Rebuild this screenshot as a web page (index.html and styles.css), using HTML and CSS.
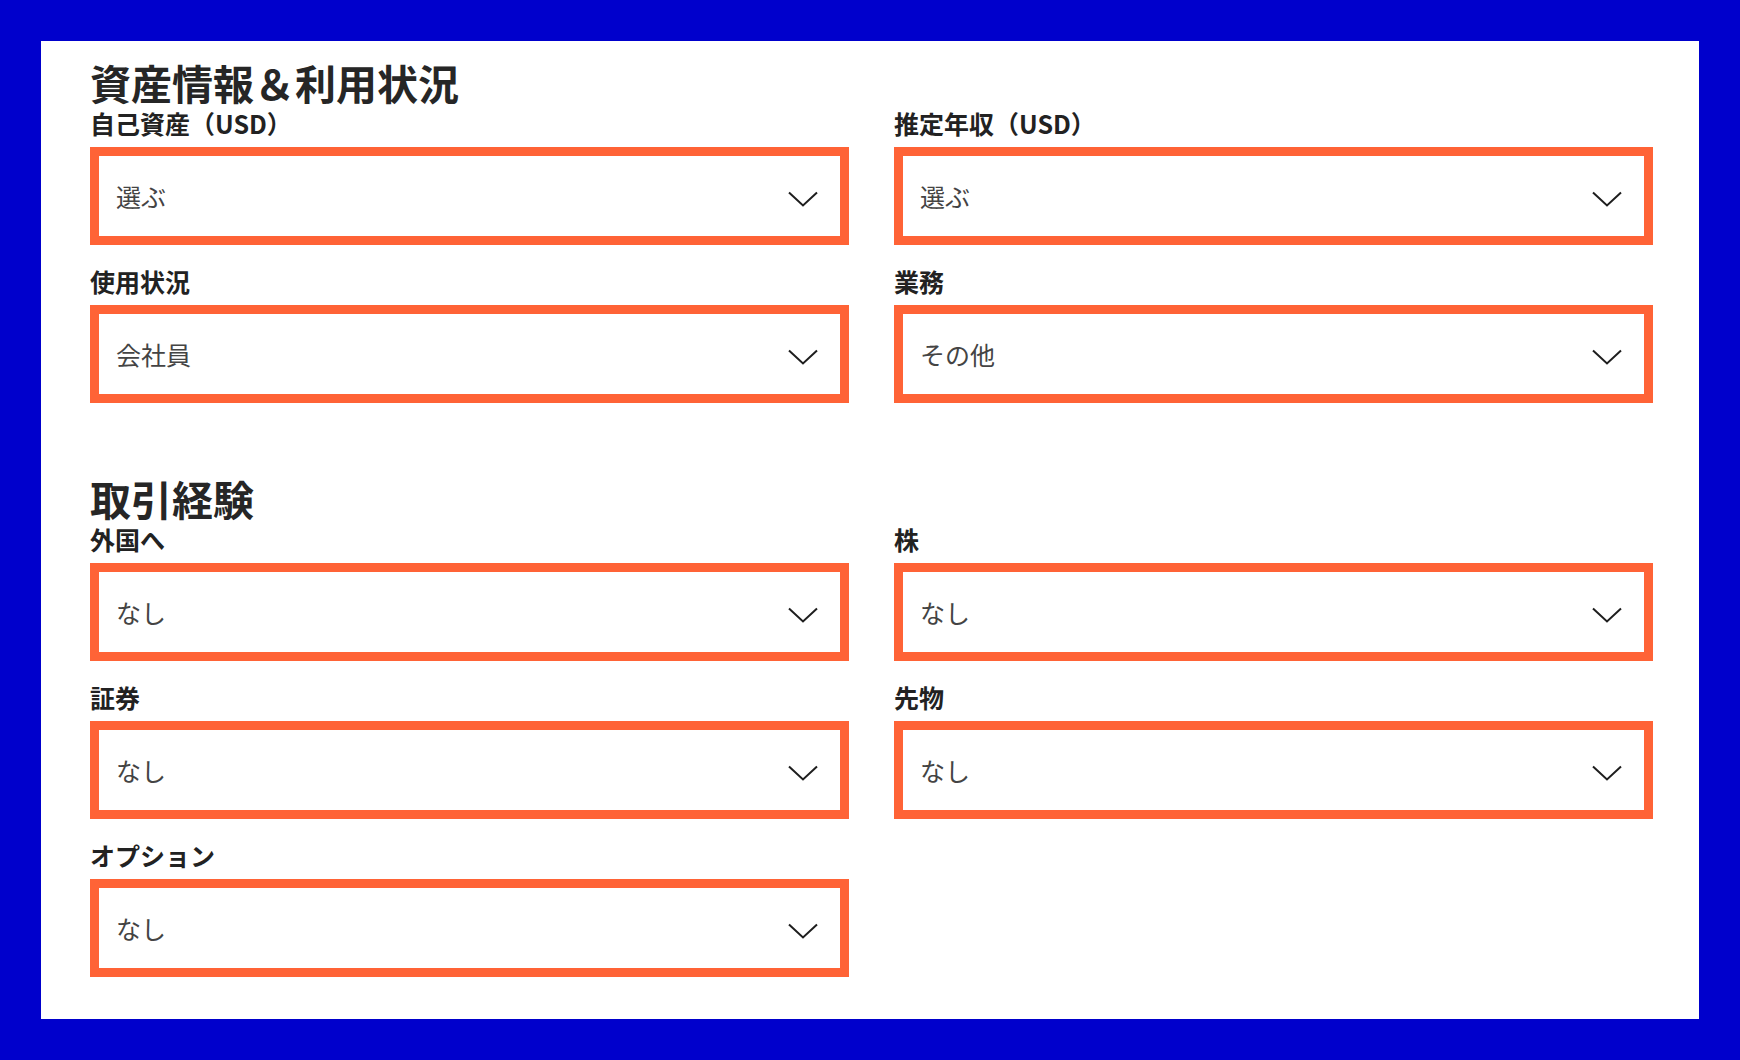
FILE: index.html
```html
<!DOCTYPE html>
<html lang="ja">
<head>
    <meta charset="UTF-8">
    <title>資産情報＆利用状況</title>
    <link rel="stylesheet" href="styles.css">
</head>
<body>
    <div class="panel">
        <section class="section">
            <h2 class="section-title">資産情報＆利用状況</h2>
            <div class="fields">
                <div class="field">
                    <div class="field-label">自己資産（USD）</div>
                    <div class="select"><span>選ぶ</span><svg class="chevron" viewBox="0 0 30 16"><path d="M1 1.5 L15 14.5 L29 1.5"/></svg></div>
                </div>
                <div class="field">
                    <div class="field-label">推定年収（USD）</div>
                    <div class="select"><span>選ぶ</span><svg class="chevron" viewBox="0 0 30 16"><path d="M1 1.5 L15 14.5 L29 1.5"/></svg></div>
                </div>
                <div class="field">
                    <div class="field-label">使用状況</div>
                    <div class="select"><span>会社員</span><svg class="chevron" viewBox="0 0 30 16"><path d="M1 1.5 L15 14.5 L29 1.5"/></svg></div>
                </div>
                <div class="field">
                    <div class="field-label">業務</div>
                    <div class="select"><span>その他</span><svg class="chevron" viewBox="0 0 30 16"><path d="M1 1.5 L15 14.5 L29 1.5"/></svg></div>
                </div>
            </div>
        </section>
        <section class="section section-next">
            <h2 class="section-title">取引経験</h2>
            <div class="fields">
                <div class="field">
                    <div class="field-label">外国へ</div>
                    <div class="select"><span>なし</span><svg class="chevron" viewBox="0 0 30 16"><path d="M1 1.5 L15 14.5 L29 1.5"/></svg></div>
                </div>
                <div class="field">
                    <div class="field-label">株</div>
                    <div class="select"><span>なし</span><svg class="chevron" viewBox="0 0 30 16"><path d="M1 1.5 L15 14.5 L29 1.5"/></svg></div>
                </div>
                <div class="field">
                    <div class="field-label">証券</div>
                    <div class="select"><span>なし</span><svg class="chevron" viewBox="0 0 30 16"><path d="M1 1.5 L15 14.5 L29 1.5"/></svg></div>
                </div>
                <div class="field">
                    <div class="field-label">先物</div>
                    <div class="select"><span>なし</span><svg class="chevron" viewBox="0 0 30 16"><path d="M1 1.5 L15 14.5 L29 1.5"/></svg></div>
                </div>
                <div class="field">
                    <div class="field-label">オプション</div>
                    <div class="select"><span>なし</span><svg class="chevron" viewBox="0 0 30 16"><path d="M1 1.5 L15 14.5 L29 1.5"/></svg></div>
                </div>
            </div>
        </section>
    </div>
</body>
</html>
```

FILE: styles.css
```css
body,html{
    padding: 0;
    margin: 0;
    background-color: #0000cc;
    font-family: "Noto Sans CJK JP", "Noto Sans", sans-serif;
}
.panel{
    margin: 41px;
    height: 978px;
    box-sizing: border-box;
    padding: 17px 46px 42px 49px;
    background-color: #fff;
}
.section-title{
    margin: 0;
    font-size: 41px;
    line-height: 48px;
    font-weight: bold;
    color: #262626;
}
.section-next{
    margin-top: 71px;
}
.fields{
    display: grid;
    grid-template-columns: 759px 759px;
    column-gap: 45px;
    row-gap: 19px;
}
.field-label{
    font-size: 25px;
    line-height: 34px;
    font-weight: bold;
    color: #222;
    margin-bottom: 7px;
}
.select{
    height: 98px;
    box-sizing: border-box;
    border: 9px solid #ff6336;
    padding: 0 22px 0 17px;
    display: flex;
    align-items: center;
    justify-content: space-between;
    font-size: 25px;
    color: #444;
}
.chevron{
    width: 30px;
    height: 16px;
    margin-top: 6px;
    fill: none;
    stroke: #1e1e1e;
    stroke-width: 2;
}
```
